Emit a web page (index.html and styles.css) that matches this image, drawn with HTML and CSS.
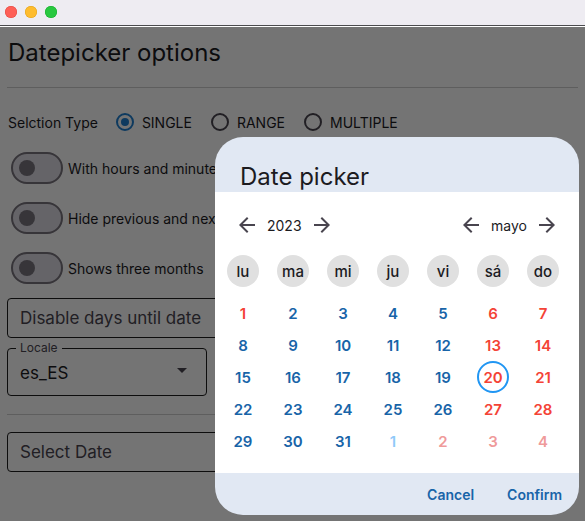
FILE: index.html
```html
<!DOCTYPE html>
<html lang="es">
<head>
<meta charset="utf-8">
<title>Datepicker options</title>
<link rel="stylesheet" href="styles.css">
</head>
<body>
<div class="window">
  <div class="titlebar">
    <span class="light tl-close"></span>
    <span class="light tl-min"></span>
    <span class="light tl-max"></span>
  </div>
  <main class="app">
    <h1 class="title">Datepicker options</h1>
    <div class="divider first"></div>
    <div class="radio-row">
      <span class="row-label">Selction Type</span>
      <span class="radio"><span class="ring checked"></span>SINGLE</span>
      <span class="radio"><span class="ring"></span>RANGE</span>
      <span class="radio"><span class="ring"></span>MULTIPLE</span>
    </div>
    <div class="switch-row"><span class="switch"><span class="thumb"></span></span><span>With hours and minutes</span></div>
    <div class="switch-row"><span class="switch"><span class="thumb"></span></span><span>Hide previous and next month days</span></div>
    <div class="switch-row"><span class="switch"><span class="thumb"></span></span><span>Shows three months</span></div>
    <div class="field disable">Disable days until date</div>
    <div class="field locale">
      <span class="float-label">Locale</span>
      <span class="value">es_ES</span>
      <svg class="caret" width="12" height="6" viewBox="0 0 12 6"><path d="M1 0h10L6 5z" fill="#49454f"/></svg>
    </div>
    <div class="divider second"></div>
    <div class="field select">Select Date</div>
  </main>
  <div class="scrim"></div>
  <section class="dialog">
    <header class="dlg-head">Date picker</header>
    <div class="dlg-body">
      <div class="nav">
        <div class="nav-group">
          <svg class="arrow" viewBox="0 0 24 24"><path d="M20 11H7.83l5.59-5.59L12 4l-8 8 8 8 1.41-1.41L7.83 13H20v-2z"/></svg>
          <span class="nav-text">2023</span>
          <svg class="arrow" viewBox="0 0 24 24"><path d="M4 11h12.17l-5.59-5.59L12 4l8 8-8 8-1.41-1.41L16.17 13H4v-2z"/></svg>
        </div>
        <div class="nav-group">
          <svg class="arrow" viewBox="0 0 24 24"><path d="M20 11H7.83l5.59-5.59L12 4l-8 8 8 8 1.41-1.41L7.83 13H20v-2z"/></svg>
          <span class="nav-text">mayo</span>
          <svg class="arrow" viewBox="0 0 24 24"><path d="M4 11h12.17l-5.59-5.59L12 4l8 8-8 8-1.41-1.41L16.17 13H4v-2z"/></svg>
        </div>
      </div>
      <div class="grid weekdays">
        <span class="wd">lu</span><span class="wd">ma</span><span class="wd">mi</span><span class="wd">ju</span><span class="wd">vi</span><span class="wd">sá</span><span class="wd">do</span>
      </div>
      <div class="grid days">
        <span class="d hol">1</span><span class="d">2</span><span class="d">3</span><span class="d">4</span><span class="d">5</span><span class="d hol">6</span><span class="d hol">7</span>
        <span class="d">8</span><span class="d">9</span><span class="d">10</span><span class="d">11</span><span class="d">12</span><span class="d hol">13</span><span class="d hol">14</span>
        <span class="d">15</span><span class="d">16</span><span class="d">17</span><span class="d">18</span><span class="d">19</span><span class="d hol"><span class="sel">20</span></span><span class="d hol">21</span>
        <span class="d">22</span><span class="d">23</span><span class="d">24</span><span class="d">25</span><span class="d">26</span><span class="d hol">27</span><span class="d hol">28</span>
        <span class="d">29</span><span class="d">30</span><span class="d">31</span><span class="d faded">1</span><span class="d faded-hol">2</span><span class="d faded-hol">3</span><span class="d faded-hol">4</span>
      </div>
    </div>
    <footer class="dlg-foot">
      <span class="btn">Cancel</span>
      <span class="btn">Confirm</span>
    </footer>
  </section>
</div>
</body>
</html>
```

FILE: styles.css
```css
* { box-sizing: border-box; }
html, body { margin: 0; padding: 0; }
body {
  width: 585px;
  height: 521px;
  overflow: hidden;
  background: #ffffff;
  font-family: Inter, "Noto Sans", sans-serif;
  color: #1c1b1f;
}
.window {
  position: relative;
  width: 585px;
  height: 521px;
  overflow: hidden;
  background: #ffffff;
}
.titlebar {
  height: 26px;
  background: #eeecf2;
  border-bottom: 1px solid #4b4b4e;
  display: flex;
  align-items: center;
  gap: 8px;
  padding: 0 0 1px 5px;
}
.light {
  width: 12px;
  height: 12px;
  border-radius: 50%;
}
.tl-close { background: #fe5f57; box-shadow: inset 0 0 0 0.5px #e2463f; }
.tl-min { background: #febc2e; box-shadow: inset 0 0 0 0.5px #e1a116; }
.tl-max { background: #28c840; box-shadow: inset 0 0 0 0.5px #12ac28; }

.app {
  display: flex;
  flex-direction: column;
  padding: 0 7px;
}
.title {
  margin: 11px 0 0 1px;
  font-size: 24px;
  line-height: 32px;
  font-weight: 400;
  color: #1c1b1f;
}
.divider {
  height: 1px;
  background: #cfcfcf;
}
.divider.first { margin-top: 18px; }
.divider.second { margin-top: 18px; }

.radio-row {
  margin-top: 22px;
  height: 24px;
  display: flex;
  align-items: center;
  padding-left: 1px;
  font-size: 14px;
  color: #1c1b1f;
}
.row-label { margin-right: 18px; }
.radio {
  display: flex;
  align-items: center;
  gap: 8px;
  margin-right: 19px;
}
.ring {
  width: 18px;
  height: 18px;
  border-radius: 50%;
  border: 2px solid #49454f;
  display: flex;
  align-items: center;
  justify-content: center;
}
.ring.checked { border-color: #1f7fd0; }
.ring.checked::after {
  content: "";
  width: 8px;
  height: 8px;
  border-radius: 50%;
  background: #1f7fd0;
}

.switch-row {
  margin-top: 18px;
  height: 32px;
  display: flex;
  align-items: center;
  gap: 5px;
  padding-left: 4px;
  font-size: 14px;
  white-space: nowrap;
}
.switch {
  flex: none;
  width: 52px;
  height: 32px;
  border-radius: 16px;
  border: 2px solid #79747e;
  background: #dedce4;
  display: flex;
  align-items: center;
  padding-left: 6px;
}
.thumb {
  width: 16px;
  height: 16px;
  border-radius: 50%;
  background: #79747e;
}

.field {
  border: 1px solid #1e1e1e;
  border-radius: 4px;
  display: flex;
  align-items: center;
  padding-left: 12px;
  font-size: 17px;
  color: #49454f;
}
.field.disable {
  margin-top: 14px;
  height: 40px;
}
.field.locale {
  position: relative;
  margin-top: 10px;
  width: 200px;
  height: 48px;
  color: #1c1b1f;
  padding-top: 2px;
}
.float-label {
  position: absolute;
  left: 8px;
  top: -8px;
  padding: 0 4px;
  font-size: 12px;
  line-height: 14px;
  color: #49454f;
  background: #ffffff;
}
.value {
  flex: 1;
  font-size: 17px;
}
.caret { margin-right: 18px; margin-top: -4px; }
.field.select {
  margin-top: 17px;
  height: 40px;
}

.scrim {
  position: absolute;
  left: 0;
  right: 0;
  top: 27px;
  bottom: 0;
  background: rgba(0, 0, 0, 0.545);
}

.dialog {
  position: absolute;
  left: 215px;
  top: 137px;
  width: 364px;
  height: 378px;
  border-radius: 28px;
  overflow: hidden;
  background: #e1e8f3;
  display: flex;
  flex-direction: column;
}
.dlg-head {
  height: 55px;
  padding: 25px 0 0 25px;
  font-size: 24px;
  line-height: 30px;
  color: #1c1b1f;
}
.dlg-body {
  background: #ffffff;
  height: 281px;
  padding-top: 13px;
}
.nav {
  height: 40px;
  display: flex;
  align-items: center;
  justify-content: space-between;
  padding: 0 20px 0 20px;
}
.nav-group {
  display: flex;
  align-items: center;
  gap: 8px;
}
.arrow {
  width: 24px;
  height: 24px;
  fill: #49454f;
}
.nav-text {
  font-size: 14px;
  color: #1c1b1f;
}
.grid {
  display: grid;
  grid-template-columns: repeat(7, 50px);
  padding-left: 3px;
}
.weekdays { margin-top: 10px; }
.wd {
  justify-self: center;
  width: 32px;
  height: 32px;
  border-radius: 50%;
  background: #e0e0e0;
  display: flex;
  align-items: center;
  justify-content: center;
  font-size: 15px;
  font-weight: 500;
  color: #1c1b1f;
}
.days {
  margin-top: 10px;
  grid-auto-rows: 32px;
}
.d {
  display: flex;
  align-items: center;
  justify-content: center;
  font-size: 15px;
  font-weight: 600;
  color: #1864a8;
}
.d.hol { color: #f44336; }
.d.faded { color: #90caf9; }
.d.faded-hol { color: #ef9a9a; }
.sel {
  width: 32px;
  height: 32px;
  border-radius: 50%;
  border: 2px solid #2196f3;
  display: flex;
  align-items: center;
  justify-content: center;
}

.dlg-foot {
  flex: 1;
  display: flex;
  align-items: center;
  justify-content: flex-end;
  gap: 33px;
  padding: 0 17px 0 0;
}
.btn {
  font-size: 14px;
  font-weight: 600;
  color: #1864a8;
}
```
